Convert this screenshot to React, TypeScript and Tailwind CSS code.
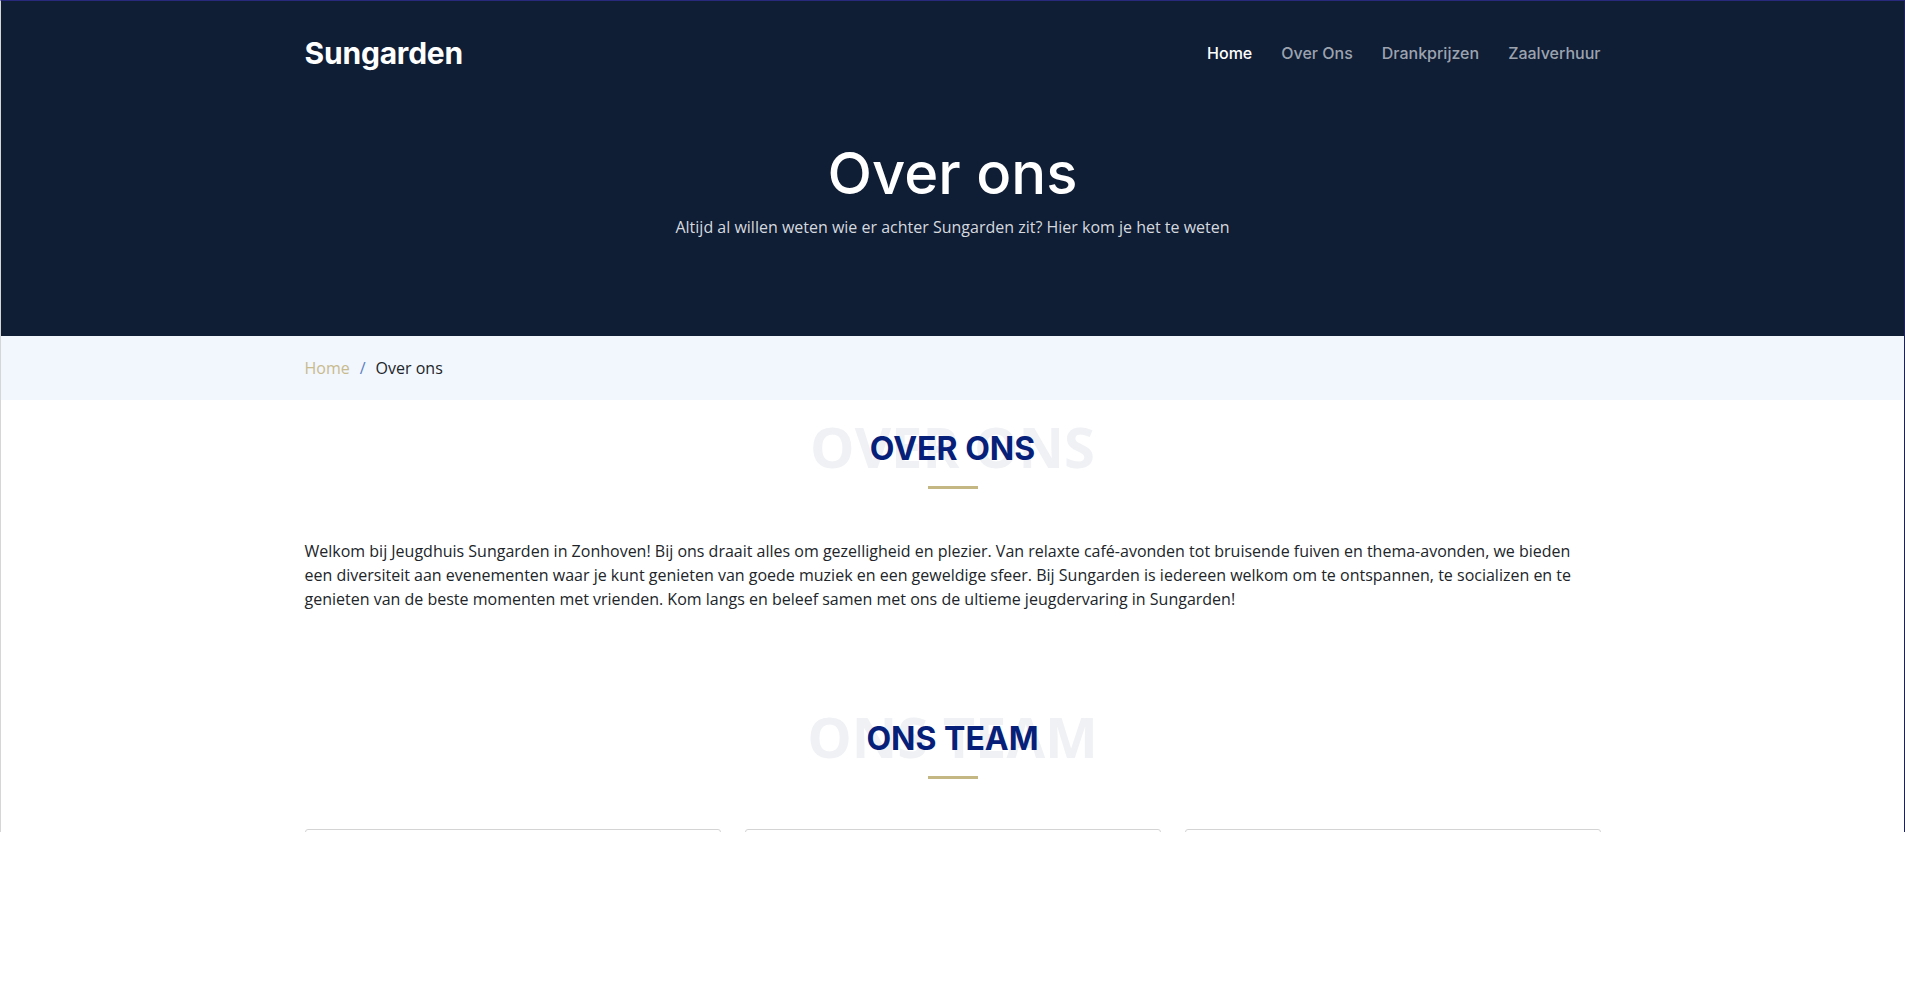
const navItems = [
  { label: 'Home', active: true },
  { label: 'Over Ons', active: false },
  { label: 'Drankprijzen', active: false },
  { label: 'Zaalverhuur', active: false },
];

function SectionTitle({ title }: { title: string }) {
  return (
    <div className="flex flex-col items-center">
      <div className="relative">
        <div className="font-['Open_Sans',sans-serif] text-[56px] font-bold leading-[58px] text-[#eff1f4] select-none">
          {title}
        </div>
        <div className="absolute inset-0 flex translate-y-[3px] items-center justify-center">
          <h2 className="font-['Inter',sans-serif] text-[32px] font-bold leading-[32px] text-[#06207a] whitespace-nowrap">
            {title}
          </h2>
        </div>
      </div>
      <div className="mt-[11px] h-[3px] w-[50px] bg-[#c5b783]" />
    </div>
  );
}

export default function App() {
  return (
    <div className="min-h-screen w-full bg-white font-['Open_Sans',sans-serif]">
      <div className="h-[832px] overflow-hidden border-t border-r border-l border-t-[#28297d] border-r-[#1d2256] border-l-[#d6d6d6] bg-white">
        {/* hero */}
        <header className="h-[335px] bg-[#0f1d35]">
          <div className="mx-auto w-[1296px] pt-[34px]">
            <nav className="flex h-[36px] items-center justify-between">
              <a className="font-['Inter',sans-serif] text-[30px] font-bold leading-[36px] tracking-[-0.2px] text-white">
                Sungarden
              </a>
              <ul className="flex items-center gap-[29px] font-['Inter',sans-serif] text-[16px] font-medium">
                {navItems.map((item) => (
                  <li key={item.label} className={item.active ? 'text-white' : 'text-[#9ca3af]'}>
                    {item.label}
                  </li>
                ))}
              </ul>
            </nav>
            <div className="mt-[72px] text-center">
              <h1 className="font-['Inter',sans-serif] text-[58px] font-medium leading-[60px] text-white">
                Over ons
              </h1>
              <p className="mt-[12px] text-[16px] leading-[24px] text-[#d5d9df]">
                Altijd al willen weten wie er achter Sungarden zit? Hier kom je het te weten
              </p>
            </div>
          </div>
        </header>

        {/* breadcrumb */}
        <div className="h-[64px] bg-[#f2f6fd]">
          <div className="mx-auto flex h-full w-[1296px] items-center gap-[10px] text-[16px] font-medium">
            <span className="text-[#c8bb8e]">Home</span>
            <span className="font-normal text-[#5b7fc0]">/</span>
            <span className="text-[#212529]">Over ons</span>
          </div>
        </div>

        {/* over ons */}
        <section className="mx-auto w-[1296px] pt-[17px]">
          <SectionTitle title="OVER ONS" />
          <p className="mt-[50px] text-[16px] leading-[24px] text-[#212529]">
            Welkom bij Jeugdhuis Sungarden in Zonhoven! Bij ons draait alles om gezelligheid en plezier. Van relaxte
            café-avonden tot bruisende fuiven en thema-avonden, we bieden een diversiteit aan evenementen waar je kunt
            genieten van goede muziek en een geweldige sfeer. Bij Sungarden is iedereen welkom om te ontspannen, te
            socializen en te genieten van de beste momenten met vrienden. Kom langs en beleef samen met ons de ultieme
            jeugdervaring in Sungarden!
          </p>
        </section>

        {/* team */}
        <section className="mx-auto w-[1296px] pt-[96px]">
          <SectionTitle title="ONS TEAM" />
          <div className="mt-[50px] grid grid-cols-3 gap-6">
            {[0, 1, 2].map((i) => (
              <div key={i} className="h-[320px] rounded-t-[3px] border border-[#d4d4d4] bg-white" />
            ))}
          </div>
        </section>
      </div>
    </div>
  );
}
